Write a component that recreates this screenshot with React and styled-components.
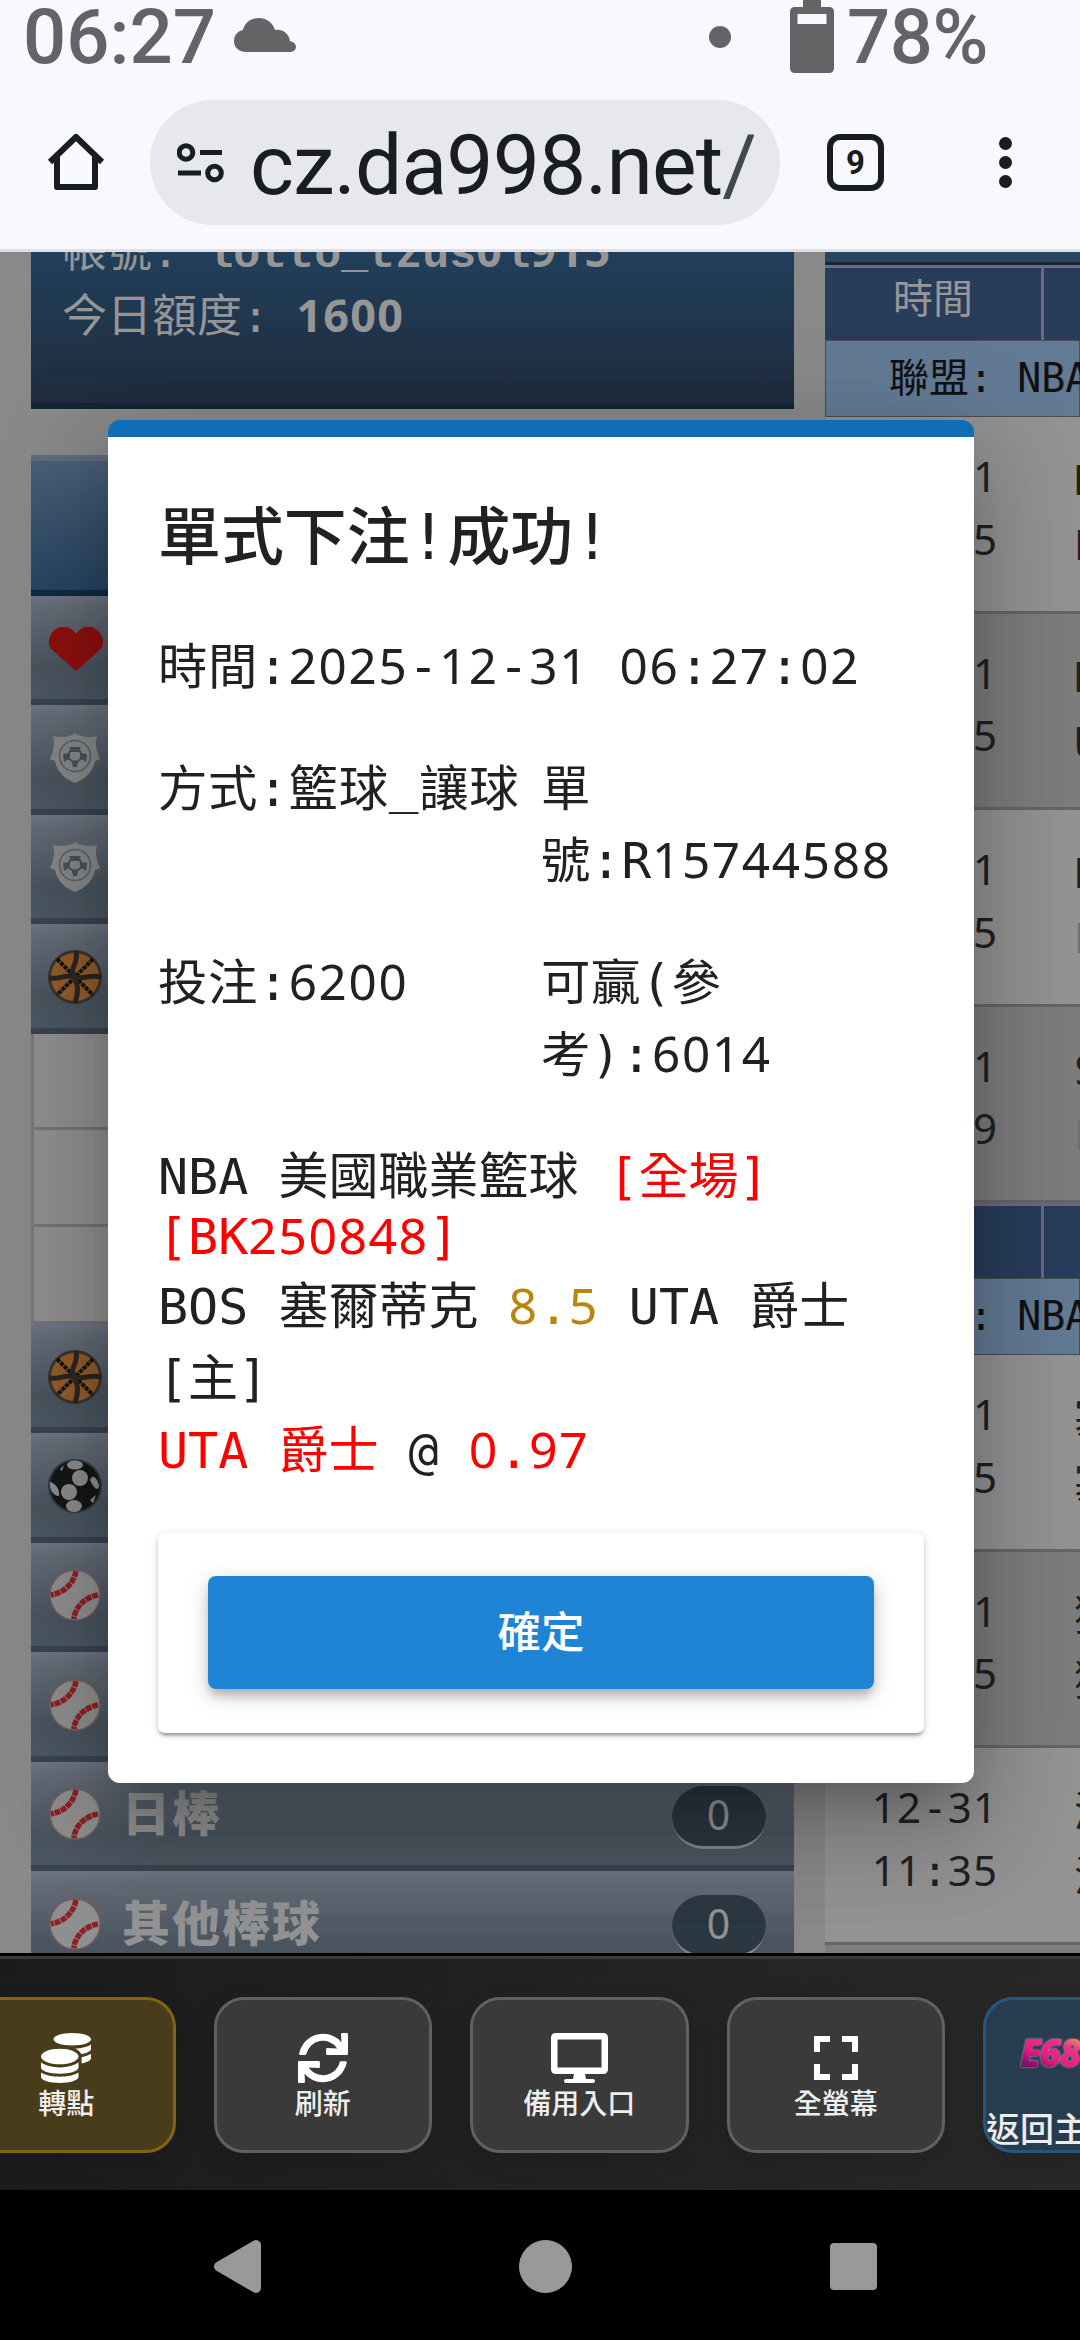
import React from 'react'
import styled, { createGlobalStyle } from 'styled-components'
import { FaCoins, FaSync } from 'react-icons/fa'

const GlobalStyle = createGlobalStyle`
  * { box-sizing: border-box; }
  body {
    margin: 0;
    background: #000;
  }
`

const mono = `"DejaVu Sans Mono", "Noto Sans CJK TC", monospace`
const sans = `Roboto, "Noto Sans CJK TC", sans-serif`

const menuTop = [
    { icon: 'heart' },
    { icon: 'shield' },
    { icon: 'shield' },
    { icon: 'basketball' },
]

const menuBottom = [
    { icon: 'basketball' },
    { icon: 'soccer' },
    { icon: 'baseball' },
    { icon: 'baseball' },
    { icon: 'baseball', label: '日棒', count: 0 },
    { icon: 'baseball', label: '其他棒球', count: 0 },
]

const upperGames = [
    { date: '12-31', time: '08:05', home: 'N', away: 'P' },
    { date: '12-31', time: '08:35', home: 'D', away: 'U' },
    { date: '12-31', time: '09:05', home: 'B', away: 'P', faint: true },
    { date: '12-31', time: '11:09', home: 'S', away: 'L', faint: true },
]

const lowerGames = [
    { date: '12-31', time: '08:05', home: '塞', away: '塞' },
    { date: '12-31', time: '08:35', home: '猛', away: '獅' },
    { date: '12-31', time: '11:35', home: '湖', away: '活' },
    { date: '', time: '', home: '', away: '' },
]


// digits come from a face with a plain zero, spaced out to the mono pitch
function Mono({ children }) {
    return String(children).split(/(\d+)/).map((part, i) => (
        i % 2 ? <Digits key={i}>{part}</Digits> : part
    ))
}


function SportIcon({ name }) {
    if (name === 'heart') {
        return (
            <svg width="56" height="56" viewBox="0 0 56 56">
                <path d="M29 50 L4 28 C0 22 2 13 9 8 C16 4 24 5 29 13 C34 5 42 4 49 8 C56 13 58 22 54 28 Z" fill="#8f0f0f" />
            </svg>
        )
    }
    if (name === 'shield') {
        return (
            <svg width="56" height="56" viewBox="0 0 56 56">
                <path d="M28 3 C33 7 42 8 50 6 C48 14 49 20 53 29 L48 31 C46 42 38 49 28 53 C18 49 10 42 8 31 L3 29 C7 20 8 14 6 6 C14 8 23 7 28 3 Z" fill="#868888" />
                <circle cx="28" cy="26" r="15.500" fill="none" stroke="#56606a" strokeWidth="1.500" />
                <path d="M22 17 h12 l-2 4 h-8z M16 24 l6 -1 1 5 -6 4z M40 24 l-6 -1 -1 5 6 4z M25 32 l3 -2 3 2 -1 5 h-4z" fill="#46515b" />
                <path d="M23 21 h10 l2 7 -7 5 -7 -5z" fill="none" stroke="#46515b" strokeWidth="2" />
            </svg>
        )
    }
    if (name === 'basketball') {
        return (
            <svg width="56" height="56" viewBox="0 0 56 56">
                <circle cx="28" cy="28" r="25.500" fill="#925c2a" stroke="#3c3630" strokeWidth="3" />
                <g fill="none" stroke="#2c2620" strokeWidth="5">
                    <path d="M10 10 L46 46 M46 10 L10 46" stroke="#151515" strokeWidth="4" strokeDasharray="4 1" />
                    <path d="M29 2 C32 15 22 18 27 28 C32 38 31 43 28 54" />
                    <path d="M2 29 C15 31 19 24 28 28 C37 31 42 25 54 28" />
                </g>
            </svg>
        )
    }
    if (name === 'soccer') {
        return (
            <svg width="56" height="56" viewBox="0 0 56 56">
                <circle cx="28" cy="28" r="26" fill="#151616" stroke="#34393d" strokeWidth="2" />
                <g fill="#8c8c8c">
                    <ellipse cx="28" cy="7" rx="8" ry="4.500" />
                    <circle cx="33" cy="20" r="8" />
                    <circle cx="22" cy="34" r="8" />
                    <ellipse cx="27" cy="48" rx="8" ry="6" />
                    <path d="M43 22 C46 15 50 20 52 27 C52 34 47 31 43 22 Z" />
                    <path d="M3 24 C8 25 13 31 12 38 C6 38 2 31 3 24 Z" />
                    <path d="M43 42 l6 -5 l-3 8z M13 11 l4 -4 l-2 6z" />
                </g>
            </svg>
        )
    }
    return (
        <svg width="56" height="56" viewBox="0 0 56 56">
            <circle cx="28" cy="28" r="25" fill="#8f8f8f" stroke="#755f60" strokeWidth="1.500" />
            <g fill="none" stroke="#8e2023" strokeWidth="5.500" strokeDasharray="6 .8">
                <path d="M29 4 C27 16 17 26 4 28" />
                <path d="M51 28 C39 30 28 39 27 52" />
            </g>
        </svg>
    )
}


function StatusBar() {
    return (
        <Status>
            <Clock>06:27</Clock>
            <svg width="64" height="36" viewBox="0 0 64 36">
                <path d="M14 35 C5 35 1 30 1 24 C1 18 5 14 10 13 C12 5 18 1 26 1 C34 1 40 6 42 13 C50 12 56 17 57 24 C61 25 63 27 63 30 C63 33 60 35 56 35 Z" fill="#626466" />
            </svg>
            <Spacer />
            <Dot />
            <svg width="44" height="73" viewBox="0 0 44 73">
                <path d="M13 0 H31 V7 H39 Q44 7 44 12 V68 Q44 73 39 73 H5 Q0 73 0 68 V12 Q0 7 5 7 H13 Z M7.500 14 V24 H36.500 V14 Z" fill="#626466" fillRule="evenodd" />
            </svg>
            <Percent>78%</Percent>
        </Status>
    )
}


function AddressBar() {
    return (
        <Address>
            <HomeBtn>
                <svg width="58" height="60" viewBox="0 0 58 60">
                    <path d="M3 30 L29 5 L55 30 M10 25 V55 H48 V25" fill="none" stroke="#191c20" strokeWidth="6" strokeLinejoin="round" />
                </svg>
            </HomeBtn>
            <UrlPill>
                <svg width="48" height="40" viewBox="0 0 48 40">
                    <g fill="none" stroke="#191c20" strokeWidth="5">
                        <circle cx="9" cy="9.500" r="6.800" />
                        <path d="M23 9.500 H45 M1 30 H24" />
                        <circle cx="37.500" cy="30" r="6.800" />
                    </g>
                </svg>
                <Url>cz.da998.net<i>/game</i></Url>
            </UrlPill>
            <Tabs>9</Tabs>
            <Kebab>
                <span />
                <span />
                <span />
            </Kebab>
        </Address>
    )
}


function MenuItem({ item }) {
    return (
        <Item>
            <SportIcon name={item.icon} />
            {item.label && <ItemLabel>{item.label}</ItemLabel>}
            {item.label && <Count><Mono>{item.count}</Mono></Count>}
        </Item>
    )
}


function GameTable({ title, games }) {
    return (
        <div>
            <HeadRow>
                <HeadCell>{title}</HeadCell>
                <HeadCell />
            </HeadRow>
            <League>聯盟: NBA 美國職業籃球</League>
            {games.map((g, i) => (
                <GameRow key={i} $dark={i % 2 === 1}>
                    <GameTime>
                        <Mono>{g.date}</Mono><br />
                        <Mono>{g.time}</Mono>
                    </GameTime>
                    <Teams>
                        {g.home}<br />
                        <Team $faint={g.faint}>{g.away}</Team>
                    </Teams>
                </GameRow>
            ))}
        </div>
    )
}


function BetDialog() {
    return (
        <Dialog>
            <DialogTitle>單式下注!成功!</DialogTitle>
            <Field><Mono>時間:2025-12-31 06:27:02</Mono></Field>
            <FieldGrid>
                <Field>方式:籃球<Raised>_</Raised>讓球</Field>
                <Field><Mono>單號:R15744588</Mono></Field>
                <Field><Mono>投注:6200</Mono></Field>
                <Field><Mono>可贏(參考):6014</Mono></Field>
            </FieldGrid>
            <LeagueLine>
                NBA 美國職業籃球 <Tint $color="#ff0000">[全場]<br /><Mono>[BK250848]</Mono></Tint>
            </LeagueLine>
            <BetLine>
                BOS 塞爾蒂克 <Tint $color="#b8860b"><Mono>8.5</Mono></Tint> UTA 爵士[主]
            </BetLine>
            <BetLine>
                <Tint $color="#ff0000">UTA 爵士</Tint> @ <Tint $color="#ff0000"><Mono>0.97</Mono></Tint>
            </BetLine>
            <ActionCard>
                <Confirm>確定</Confirm>
            </ActionCard>
        </Dialog>
    )
}


function Toolbar() {
    return (
        <Tools>
            <ToolBtn $bg="#493c1a" $line="#826412">
                <FaCoins size={50} />
                <span>轉點</span>
            </ToolBtn>
            <ToolBtn>
                <FaSync size={50} />
                <span>刷新</span>
            </ToolBtn>
            <ToolBtn>
                <svg width="57" height="50" viewBox="0 0 57 50">
                    <path d="M5 0 H52 Q57 0 57 5 V36 Q57 41 52 41 H34 L35 46 H42 Q44 46 44 48 Q44 50 42 50 H15 Q13 50 13 48 Q13 46 15 46 H22 L23 41 H5 Q0 41 0 36 V5 Q0 0 5 0 Z M6.500 6.500 V34.500 H50.500 V6.500 Z" fill="#fff" fillRule="evenodd" />
                </svg>
                <span>備用入口</span>
            </ToolBtn>
            <ToolBtn>
                <svg width="44" height="50" viewBox="0 0 44 50">
                    <path d="M16 6 H3 V19 M28 6 H41 V19 M3 31 V44 H16 M41 31 V44 H28" fill="none" stroke="#fff" strokeWidth="6" />
                </svg>
                <span>全螢幕</span>
            </ToolBtn>
            <HomeTool $bg="#283c50" $line="#27577f">
                <Logo>E68娛樂</Logo>
                <span>返回主選單</span>
            </HomeTool>
        </Tools>
    )
}


function App() {
    return (
        <Screen>
            <GlobalStyle />
            <StatusBar />
            <AddressBar />

            <Viewport>
                <Sidebar>
                    <Account>
                        帳號: <UserName><Mono>lotto_tzus0l915</Mono></UserName><br />
                        今日額度: <b><Mono>1600</Mono></b>
                    </Account>
                    <MenuHead />
                    {menuTop.map((item, i) => <MenuItem key={i} item={item} />)}
                    <SubList>
                        <div />
                        <div />
                        <div />
                    </SubList>
                    {menuBottom.map((item, i) => <MenuItem key={i} item={item} />)}
                </Sidebar>
                <Board>
                    <BoardTop />
                    <GameTable title="時間" games={upperGames} />
                    <GameTable title="時間" games={lowerGames} />
                </Board>
                <BetDialog />
            </Viewport>

            <Toolbar />

            <NavBar>
                <svg width="1080" height="150" viewBox="0 0 1080 150">
                    <g fill="#999" stroke="#999" strokeLinejoin="round">
                        <path d="M219 76.500 L256 55 V98 Z" strokeWidth="10" />
                        <circle cx="545.500" cy="76.500" r="26" strokeWidth="1" />
                        <rect x="834" y="57" width="39" height="39" strokeWidth="8" />
                    </g>
                </svg>
            </NavBar>
        </Screen>
    )
}

export default App

const Screen = styled.div`
width: 1080px;
height: 2340px;
overflow: hidden;
display: flex;
flex-direction: column;
font-family: ${mono};
`

const Digits = styled.span`
font-family: "Noto Sans", sans-serif;
letter-spacing: 0.029em;
line-height: 0;
`

/* ---- browser chrome ---- */

const Status = styled.div`
display: flex;
align-items: flex-start;
height: 75px;
padding: 0 86px 0 23px;
background-color: #f8f9ff;
color: #626466;
font-family: ${sans};
font-size: 76px;
font-weight: 500;
line-height: 75px;
svg{
flex: none;
}
svg:nth-of-type(1){
margin: 17px 0 0 18px;
}
svg:nth-of-type(2){
margin-left: 59px;
}
`

const Clock = styled.div`
width: 192px;
white-space: nowrap;
`

const Percent = styled.div`
width: 147px;
margin-left: 13px;
letter-spacing: -0.500px;
`

const Spacer = styled.div`
flex: 1;
`

const Dot = styled.div`
width: 22px;
height: 22px;
margin-top: 26px;
border-radius: 50%;
background-color: #626466;
`

const Address = styled.div`
display: flex;
align-items: flex-start;
flex: none;
height: 177px;
padding-top: 25px;
background-color: #f8f9ff;
border-bottom: 3px solid #dfe0e6;
`

const HomeBtn = styled.div`
width: 150px;
padding: 32px 0 0 47px;
`

const UrlPill = styled.div`
display: flex;
align-items: center;
width: 630px;
height: 125px;
padding: 0 25px 0 27px;
border-radius: 63px;
background-color: #e6e8ec;
svg{
flex: none;
}
`

const Url = styled.div`
width: 504px;
height: 125px;
margin-left: 25px;
overflow: hidden;
white-space: nowrap;
font-family: ${sans};
font-size: 84px;
line-height: 131px;
letter-spacing: -0.900px;
color: #191c20;
i{
font-style: normal;
letter-spacing: -5px;
color: #43474e;
}
`

const Tabs = styled.div`
width: 57px;
height: 57px;
margin: 34px 0 0 47px;
border: 6px solid #191c20;
border-radius: 13px;
font: bold 33px/45px ${sans};
text-align: center;
color: #191c20;
`

const Kebab = styled.div`
display: flex;
flex-direction: column;
gap: 6px;
margin: 37px 0 0 115px;
span{
width: 13px;
height: 13px;
border-radius: 50%;
background-color: #191c20;
}
`

/* ---- page behind the dialog ---- */

const Viewport = styled.div`
position: relative;
display: flex;
gap: 31px;
height: 1701px;
flex: none;
padding-left: 31px;
overflow: hidden;
background-color: #898989;
`

const Sidebar = styled.div`
width: 763px;
flex: none;
`

const Account = styled.div`
height: 157px;
padding-left: 31px;
border-bottom: 6px solid #112738;
background: linear-gradient(#213f5b, #1f2c3d);
overflow: hidden;
font-size: 45px;
line-height: 65px;
color: #969696;
white-space: nowrap;
&::before{
content: "";
display: block;
margin-top: -33px;
}
`

const UserName = styled.b`
font-family: "Liberation Mono", monospace;
line-height: 0;
`

const MenuHead = styled.div`
height: 141px;
margin-top: 46px;
border-top: 6px solid #5f6c7c;
border-bottom: 6px solid #112b3f;
background: linear-gradient(#4a5f77, #274462);
`

const Item = styled.div`
display: flex;
align-items: center;
height: 109.4px;
padding: 0 28px 0 16px;
border-bottom: 6px solid #3a444d;
background: linear-gradient(#6f7685, #646c77 12%, #49545e 70%, #4b5863);
svg{
flex: none;
margin-top: 2px;
}
`

const ItemLabel = styled.div`
margin: -6px 0 0 19px;
font: 900 48px/60px "Noto Sans CJK TC", sans-serif;
letter-spacing: 2px;
color: #929292;
`

const Count = styled.div`
width: 94px;
height: 63px;
margin-left: auto;
margin-top: 8px;
border-bottom: 3px solid #85888a;
border-radius: 32px;
background-color: #2b3741;
font-size: 41px;
line-height: 60px;
text-align: center;
color: #929292;
`

const SubList = styled.div`
border-left: 3px solid #777;
div{
height: 96.8px;
border-bottom: 3px solid #747474;
background-color: #8f8f8f;
}
`

const Board = styled.div`
flex: 1;
overflow: hidden;
background-color: #929292;
`

const BoardTop = styled.div`
height: 13px;
border-bottom: 3px solid #13293b;
background-color: #2a4661;
`

const HeadRow = styled.div`
display: flex;
height: 75px;
border-top: 3px solid #6c6a80;
background-color: #283d5b;
`

const HeadCell = styled.div`
width: 219px;
flex: none;
border-right: 3px solid #6c6a80;
font-size: 40px;
line-height: 63px;
text-align: center;
color: #979797;
`

const League = styled.div`
height: 77px;
padding-left: 63px;
border: 1px solid #4a4d50;
background-color: #637a95;
font-size: 40px;
line-height: 74px;
white-space: nowrap;
color: #111;
`

const GameRow = styled.div`
display: flex;
height: 196.5px;
border-bottom: 3px solid #666;
background-color: ${props => props.$dark ? '#7d7d7d' : '#939393'};
color: #212121;
`

const GameTime = styled.div`
width: 216px;
padding: 30px 0 0 4px;
flex: none;
font-size: 42px;
line-height: 62.5px;
text-align: center;
`

const Teams = styled.div`
padding: 32px 0 0 33px;
font-size: 41px;
line-height: 65px;
white-space: nowrap;
`

const Team = styled.span`
color: ${props => props.$faint ? '#707070' : '#212121'};
`

/* ---- dialog ---- */

const Dialog = styled.div`
position: absolute;
left: 108px;
top: 168px;
width: 866px;
height: 1363px;
padding: 61px 50px 0;
border-top: 17px solid #106eb6;
border-radius: 12px;
background-color: #fff;
box-shadow: 0 29px 40px -18px rgba(0, 0, 0, 0.2), 0 50px 90px 8px rgba(0, 0, 0, 0.14), 0 24px 110px 20px rgba(0, 0, 0, 0.12);
font-size: 49.4px;
line-height: 72px;
color: #212121;
`

const DialogTitle = styled.div`
margin: -1px 0 52px;
font-size: 62.9px;
font-weight: 500;
line-height: 82px;
`

const Field = styled.div`
letter-spacing: 0.7px;
${Digits}{
letter-spacing: 1.700px;
}
`

const Raised = styled.span`
vertical-align: 4px;
line-height: 0;
`

const FieldGrid = styled.div`
display: grid;
grid-template-columns: 383px 383px;
row-gap: 50px;
margin-top: 50px;
`

const LeagueLine = styled.div`
margin-top: 56px;
margin-bottom: 4px;
font-size: 50px;
line-height: 60px;
`

const BetLine = styled.div`
font-size: 50px;
line-height: 72px;
`

const Tint = styled.span`
color: ${props => props.$color};
`

const ActionCard = styled.div`
height: 200px;
margin-top: 46px;
padding: 43px 50px;
border-radius: 7px;
box-shadow: 0 5px 3px -3px rgba(0, 0, 0, 0.2), 0 3px 3px rgba(0, 0, 0, 0.14), 0 2px 8px rgba(0, 0, 0, 0.16);
`

const Confirm = styled.button`
display: block;
width: 666px;
height: 113px;
padding: 0 0 6px;
border: none;
border-radius: 8px;
background-color: #1f84d6;
box-shadow: 0 8px 10px -2px rgba(0, 0, 0, 0.2), 0 6px 22px rgba(0, 0, 0, 0.2);
font: 500 43.5px/60px "Noto Sans CJK TC", sans-serif;
color: #fff;
`

/* ---- bottom bars ---- */

const Tools = styled.div`
display: flex;
gap: 38px;
height: 237px;
flex: none;
padding-top: 38px;
margin-left: -43px;
width: 1123px;
border-top: 3px solid #000;
box-shadow: inset 0 3px 0 #3a3a3a;
background: linear-gradient(90deg, #1b1b1b, #282828);
overflow: hidden;
`

const ToolBtn = styled.div`
display: flex;
flex-direction: column;
align-items: center;
width: 218.500px;
height: 156px;
margin-top: 3px;
padding-top: 33px;
flex: none;
overflow: hidden;
border: 3px solid ${props => props.$line || '#606060'};
border-radius: 30px;
background-color: ${props => props.$bg || '#3a3a3a'};
box-shadow: 0 8px 24px rgba(0, 0, 0, 0.15);
font: 500 28px/34px "Noto Sans CJK TC", sans-serif;
color: #fff;
span{
margin-top: 2px;
color: #eee;
white-space: nowrap;
}
`

const HomeTool = styled(ToolBtn)`
align-items: flex-start;
font-size: 34px;
line-height: 40px;
`

const Logo = styled.b`
height: 40px;
margin: 0 0 33px 34px;
font: italic 900 38px/38px "Open Sans", "Noto Sans CJK TC", sans-serif;
letter-spacing: -2px;
white-space: nowrap;
background: linear-gradient(25deg, #7a0f6c 10px, #ec1a82 26px, #f0308a 44px, #f9b233 62px);
-webkit-background-clip: text;
background-clip: text;
color: transparent;
filter: drop-shadow(0 0 1px rgba(255, 255, 255, 0.6));
`

const NavBar = styled.div`
height: 150px;
flex: none;
background-color: #000;
svg{
display: block;
}
`
